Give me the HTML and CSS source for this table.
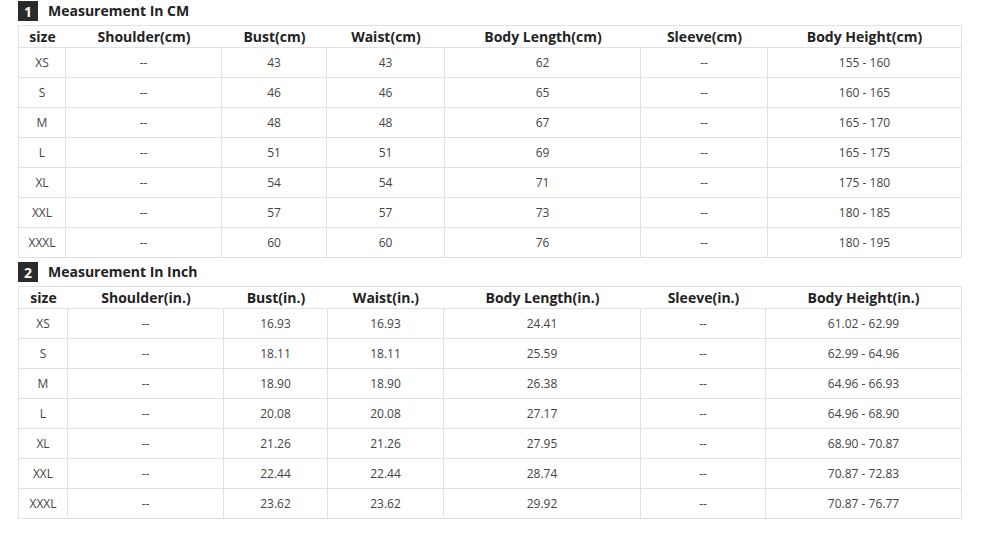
FILE: index.html
```html
<!DOCTYPE html>
<html lang="en">
<head>
<meta charset="utf-8">
<title>Size Chart</title>
<link rel="stylesheet" href="styles.css">
</head>
<body>
<div class="chart">
  <section class="block">
    <h3 class="title"><span class="badge">1</span><span class="title-text">Measurement In CM</span></h3>
    <table class="sizes">
      <thead>
        <tr>
          <th class="c1">size</th><th class="c2">Shoulder(cm)</th><th class="c3">Bust(cm)</th><th class="c4">Waist(cm)</th><th class="c5">Body Length(cm)</th><th class="c6">Sleeve(cm)</th><th class="c7 last">Body Height(cm)</th>
        </tr>
      </thead>
      <tbody>
        <tr><td>XS</td><td>--</td><td>43</td><td>43</td><td>62</td><td>--</td><td>155 - 160</td></tr>
        <tr><td>S</td><td>--</td><td>46</td><td>46</td><td>65</td><td>--</td><td>160 - 165</td></tr>
        <tr><td>M</td><td>--</td><td>48</td><td>48</td><td>67</td><td>--</td><td>165 - 170</td></tr>
        <tr><td>L</td><td>--</td><td>51</td><td>51</td><td>69</td><td>--</td><td>165 - 175</td></tr>
        <tr><td>XL</td><td>--</td><td>54</td><td>54</td><td>71</td><td>--</td><td>175 - 180</td></tr>
        <tr><td>XXL</td><td>--</td><td>57</td><td>57</td><td>73</td><td>--</td><td>180 - 185</td></tr>
        <tr><td>XXXL</td><td>--</td><td>60</td><td>60</td><td>76</td><td>--</td><td>180 - 195</td></tr>
      </tbody>
    </table>
  </section>
  <section class="block">
    <h3 class="title"><span class="badge">2</span><span class="title-text">Measurement In Inch</span></h3>
    <table class="sizes inch">
      <thead>
        <tr>
          <th class="c1">size</th><th class="c2">Shoulder(in.)</th><th class="c3">Bust(in.)</th><th class="c4">Waist(in.)</th><th class="c5">Body Length(in.)</th><th class="c6">Sleeve(in.)</th><th class="c7 last">Body Height(in.)</th>
        </tr>
      </thead>
      <tbody>
        <tr><td>XS</td><td>--</td><td>16.93</td><td>16.93</td><td>24.41</td><td>--</td><td>61.02 - 62.99</td></tr>
        <tr><td>S</td><td>--</td><td>18.11</td><td>18.11</td><td>25.59</td><td>--</td><td>62.99 - 64.96</td></tr>
        <tr><td>M</td><td>--</td><td>18.90</td><td>18.90</td><td>26.38</td><td>--</td><td>64.96 - 66.93</td></tr>
        <tr><td>L</td><td>--</td><td>20.08</td><td>20.08</td><td>27.17</td><td>--</td><td>64.96 - 68.90</td></tr>
        <tr><td>XL</td><td>--</td><td>21.26</td><td>21.26</td><td>27.95</td><td>--</td><td>68.90 - 70.87</td></tr>
        <tr><td>XXL</td><td>--</td><td>22.44</td><td>22.44</td><td>28.74</td><td>--</td><td>70.87 - 72.83</td></tr>
        <tr><td>XXXL</td><td>--</td><td>23.62</td><td>23.62</td><td>29.92</td><td>--</td><td>70.87 - 76.77</td></tr>
      </tbody>
    </table>
  </section>
</div>
</body>
</html>
```

FILE: styles.css
```css
* { box-sizing: border-box; }

html, body {
  margin: 0;
  padding: 0;
  background: #ffffff;
}

body {
  font-family: "Open Sans", "Liberation Sans", sans-serif;
  color: #333;
}

.chart {
  padding: 1px 0 0 18px;
  width: 962px;
}

.block + .block {
  margin-top: 4px;
}

.title {
  display: flex;
  align-items: center;
  height: 20px;
  margin: 0 0 4px 0;
  font-size: 14px;
  font-weight: 700;
  color: #222;
}

.badge {
  display: flex;
  align-items: center;
  justify-content: center;
  width: 20px;
  height: 20px;
  background: #2a2a2a;
  color: #fff;
  font-size: 14px;
  font-weight: 700;
  margin-right: 10px;
}

.title-text {
  line-height: 20px;
}

.sizes {
  width: 944px;
  table-layout: fixed;
  border-collapse: separate;
  border-spacing: 0;
  border-top: 1px solid #e1e1e1;
  border-left: 1px solid #e1e1e1;
}

.sizes th,
.sizes td {
  padding: 0;
  text-align: center;
  vertical-align: middle;
}

.sizes th {
  height: 22px;
  font-size: 14px;
  font-weight: 700;
  color: #222;
  border-bottom: 1px solid #e1e1e1;
}

.sizes th.last {
  border-right: 1px solid #e1e1e1;
}

.sizes td {
  height: 30px;
  font-size: 12px;
  color: #444;
  border-right: 1px solid #e1e1e1;
  border-bottom: 1px solid #e1e1e1;
}

.sizes .c1 { width: 47px; }
.sizes .c2 { width: 156px; }
.sizes .c3 { width: 105px; }
.sizes .c4 { width: 118px; }
.sizes .c5 { width: 196px; }
.sizes .c6 { width: 127px; }
.sizes .c7 { width: 194px; }

.sizes.inch .c1 { width: 49px; }
.sizes.inch .c2 { width: 156px; }
.sizes.inch .c3 { width: 104px; }
.sizes.inch .c4 { width: 116px; }
.sizes.inch .c5 { width: 197px; }
.sizes.inch .c6 { width: 125px; }
.sizes.inch .c7 { width: 196px; }
```
